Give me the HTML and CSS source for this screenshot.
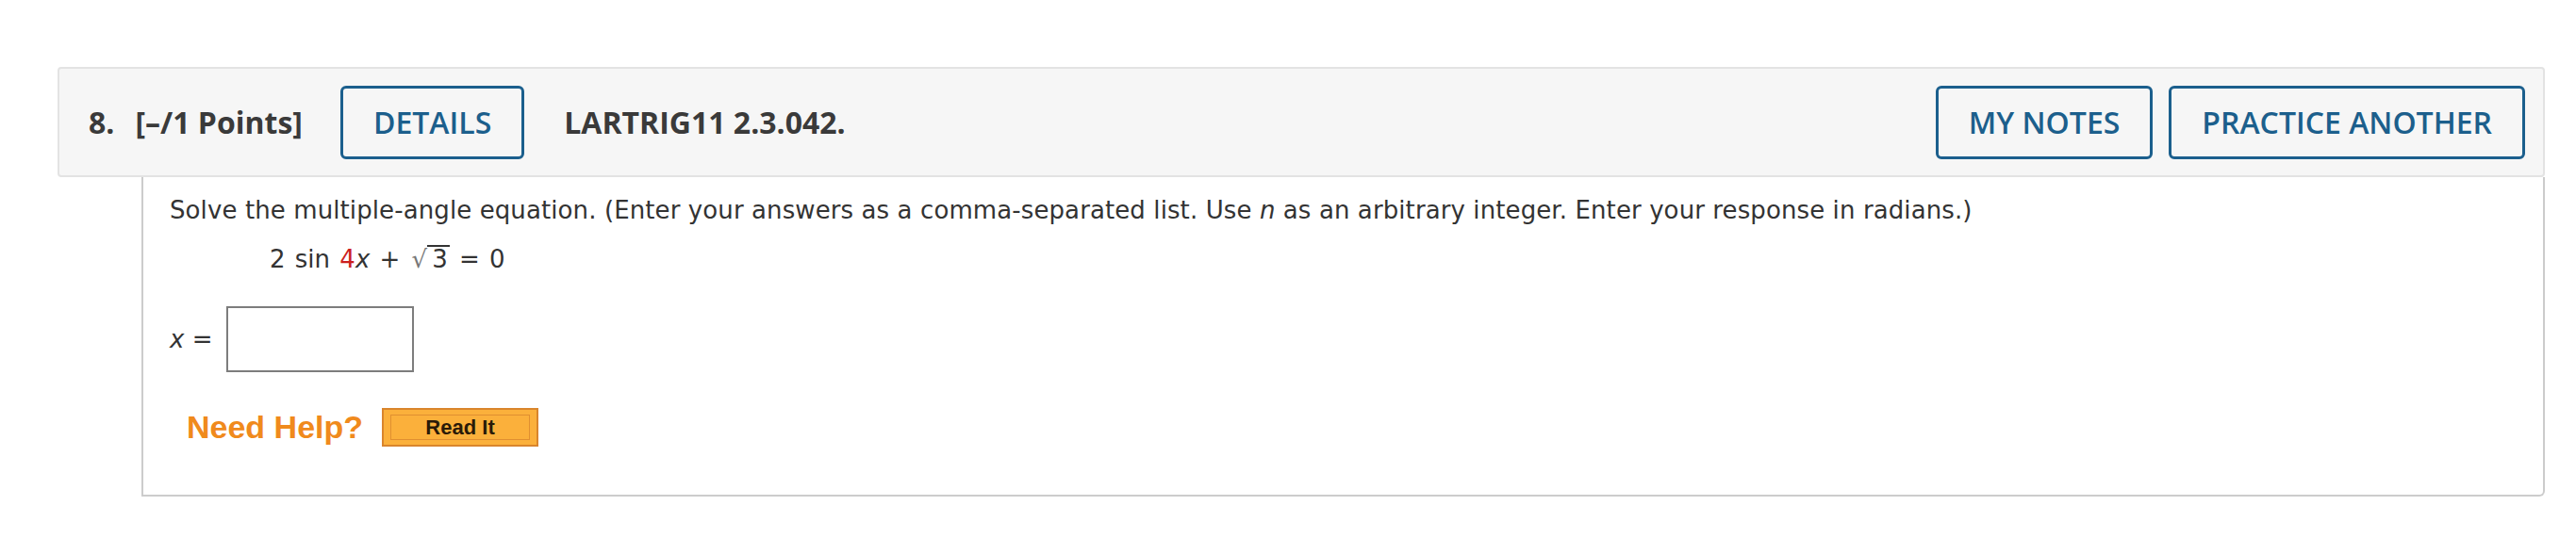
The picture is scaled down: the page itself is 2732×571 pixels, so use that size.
FILE: index.html
```html
<!DOCTYPE html>
<html>
<head>
<meta charset="utf-8">
<link rel="stylesheet" href="styles.css">
</head>
<body>
<div class="page">
  <div class="question">
    <div class="head">
      <span class="qnum">8.</span>
      <span class="points">[–/1 Points]</span>
      <button class="btn">DETAILS</button>
      <span class="code">LARTRIG11 2.3.042.</span>
      <span class="spacer"></span>
      <button class="btn">MY NOTES</button>
      <button class="btn">PRACTICE ANOTHER</button>
    </div>
    <div class="body">
      <p class="prompt">Solve the multiple-angle equation. (Enter your answers as a comma-separated list. Use <i>n</i> as an arbitrary integer. Enter your response in radians.)</p>
      <p class="equation">2 sin <span class="red">4</span><i>x</i> + <span class="radical">√</span><span class="radicand">3</span> = 0</p>
      <div class="answer">
        <span class="label"><i>x</i> =</span>
        <input class="field" type="text">
      </div>
      <div class="help">
        <span class="need">Need Help?</span>
        <span class="readit"><span class="readit-inner">Read It</span></span>
      </div>
    </div>
  </div>
</div>
</body>
</html>
```
FILE: styles.css
```css
html, body {
  margin: 0;
  padding: 0;
  background: #fff;
}
.page {
  padding: 71px 33px 0 61px;
}
.head {
  display: flex;
  align-items: center;
  box-sizing: border-box;
  height: 117px;
  padding: 0 19px 0 31px;
  background: #f6f6f6;
  border: 2px solid #e3e3e3;
  border-radius: 4px;
  font-family: "Open Sans", sans-serif;
  color: #3a3a3a;
}
.qnum, .points, .code {
  font-weight: 700;
  font-size: 32px;
}
.qnum {
  margin-right: 22px;
}
.points {
  margin-right: 40px;
}
.code {
  margin-left: 42px;
}
.spacer {
  flex: 1;
}
.btn {
  box-sizing: border-box;
  height: 78px;
  padding: 0 32px;
  background: transparent;
  border: 3px solid #1b5f8d;
  border-radius: 6px;
  font-family: "Open Sans", sans-serif;
  font-weight: 600;
  font-size: 32px;
  color: #1c5f8c;
}
.btn + .btn {
  margin-left: 17px;
}
.body {
  box-sizing: border-box;
  height: 339px;
  margin-left: 89px;
  border-left: 2px solid #cccccc;
  border-right: 2px solid #cccccc;
  border-bottom: 2px solid #cccccc;
  border-bottom-right-radius: 6px;
  padding: 20px 0 0 28px;
  font-family: "DejaVu Sans", Verdana, sans-serif;
  font-size: 26px;
  color: #333;
}
.prompt {
  margin: 0;
  line-height: 30px;
  letter-spacing: 0.1px;
}
.equation {
  margin: 22px 0 0 106px;
  line-height: 30px;
  word-spacing: 2px;
}
.red {
  color: #cc1f1f;
}
.radical {
  color: #777;
  margin-left: 2px;
}
.radicand {
  display: inline-block;
  border-top: 2px solid #333;
  line-height: 26px;
  padding: 0 2px 0 5px;
}
.answer {
  display: flex;
  align-items: center;
  margin-top: 35px;
}
.label {
  margin-right: 15px;
}
.field {
  box-sizing: border-box;
  width: 199px;
  height: 70px;
  margin: 0;
  border: 2px solid #7d7d7d;
  background: #fff;
}
.help {
  display: flex;
  align-items: center;
  margin: 38px 0 0 18px;
}
.need {
  font-family: "Liberation Sans", Arial, sans-serif;
  font-weight: 700;
  font-size: 34px;
  color: #f08a1c;
  margin-right: 20px;
}
.readit {
  box-sizing: border-box;
  width: 166px;
  height: 41px;
  padding: 5px 7px;
  background: #fbb03b;
  border: 2px solid #d9852c;
  display: flex;
}
.readit-inner {
  flex: 1;
  display: flex;
  align-items: center;
  justify-content: center;
  border: 1px solid #e08f30;
  font-family: "Liberation Sans", Arial, sans-serif;
  font-weight: 700;
  font-size: 22px;
  color: #2a1a08;
}
```
